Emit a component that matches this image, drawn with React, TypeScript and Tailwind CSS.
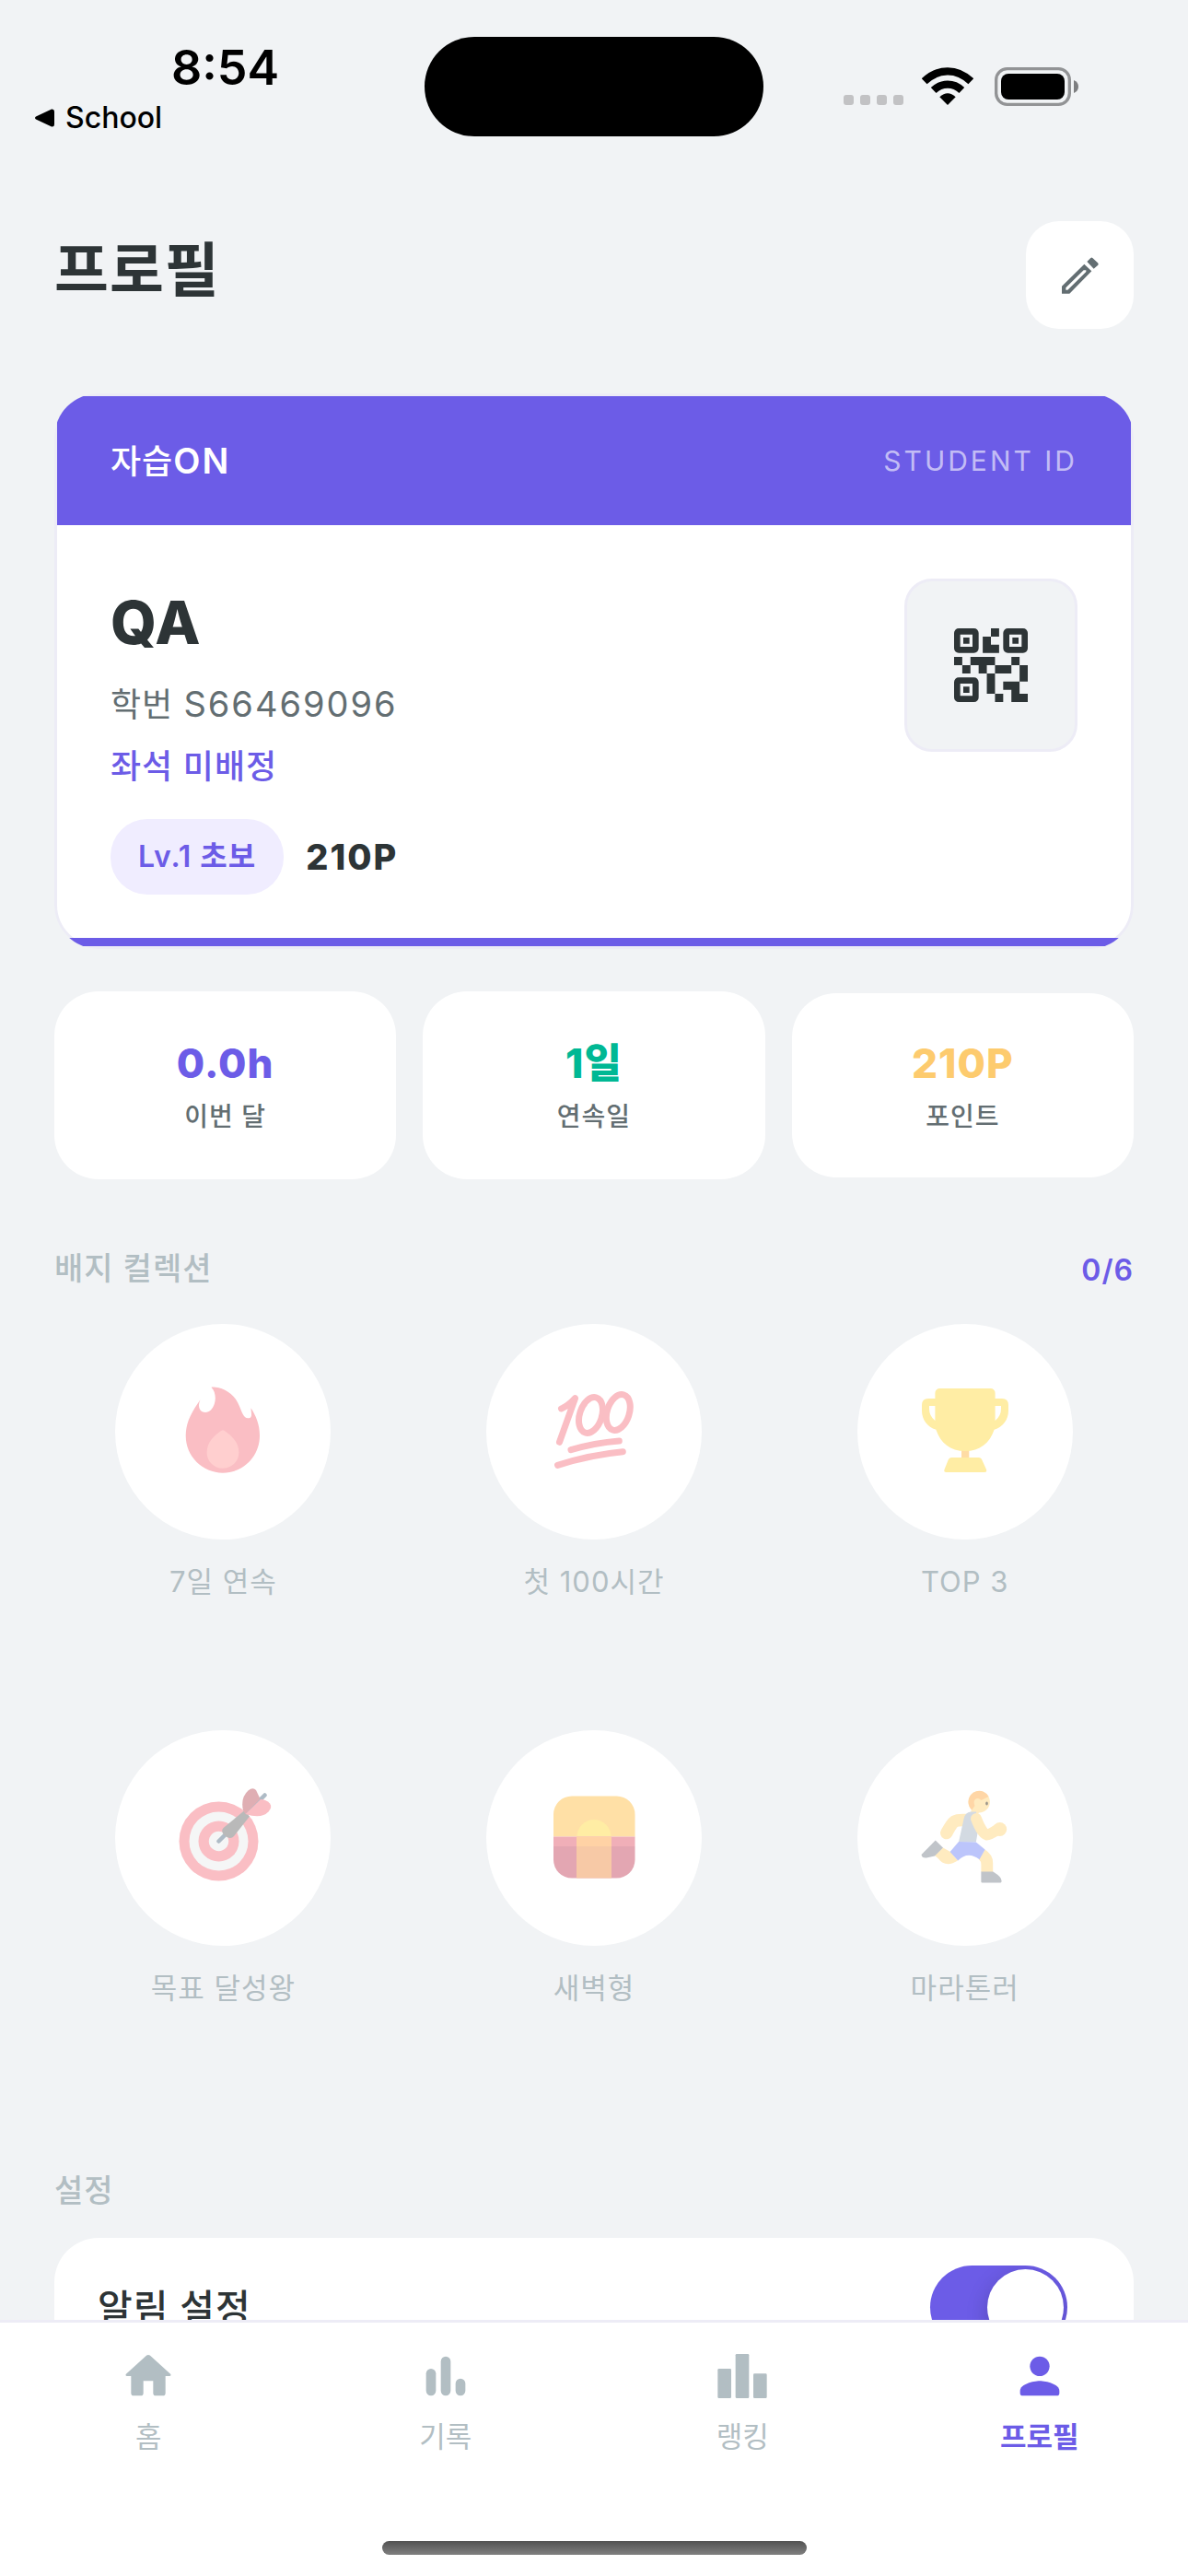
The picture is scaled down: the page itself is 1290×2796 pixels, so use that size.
import { useState, type ReactNode } from "react";
import clsx from "clsx";

interface Stat {
  value: string;
  label: string;
  className: string;
}

interface Badge {
  label: string;
  icon: ReactNode;
}

interface Tab {
  id: string;
  label: string;
  icon: ReactNode;
}

function EditIcon() {
  return (
    <svg viewBox="0 0 120 120" className="size-10" fill="currentColor" aria-hidden="true">
      <path fillRule="evenodd" d="M0 95L73 23L97 46L25 119H0ZM13 100V107H19L79 48V43H71Z" />
      <path d="M82 15L94 3Q97 0 100 3L117 19Q121 23 117 27L104 38Z" />
    </svg>
  );
}

function QrIcon() {
  return (
    <svg viewBox="0 0 18 18" className="size-20" fill="currentColor" aria-hidden="true">
      <g fill="none" stroke="currentColor" strokeWidth="1.5">
        <rect x=".75" y=".75" width="4.5" height="4.5" rx=".4" />
        <rect x="12.75" y=".75" width="4.5" height="4.5" rx=".4" />
        <rect x=".75" y="12.75" width="4.5" height="4.5" rx=".4" />
      </g>
      <path d="M2.25 2.25h1.5v1.5h-1.5zM14.25 2.25h1.5v1.5h-1.5zM2.25 14.25h1.5v1.5h-1.5z" />
      <path d="M9 0h2v2H9zM7 2h2v2h2v2H7zM0 7h2v2H0zM2 9h2v2H2zM4 7h6v2H8v2H6V9H4zM10 9h4v2h-4zM14 7h2v2h-2zM16 9h2v4h-2zM8 11h2v5H8zM10 16h2v2h-2zM12 13h4v3h2v2h-4v-3h-2z" />
    </svg>
  );
}

function WifiIcon() {
  return (
    <svg viewBox="0 0 168 123" className="h-[41px] w-14" aria-hidden="true">
      <g fill="none" stroke="#000" strokeWidth="25">
        <path d="M8 46Q42 13 84 13T160 46" />
        <path d="M38 75Q58 56 84 56T130 75" />
      </g>
      <path d="M58 97Q84 73 110 97L84 123Z" />
    </svg>
  );
}

function BatteryIcon() {
  return (
    <svg viewBox="0 0 273 126" className="h-[42px] w-[91px]" aria-hidden="true">
      <rect x="5" y="5" width="239" height="116" rx="36" fill="none" stroke="#929395" strokeWidth="10" />
      <rect x="21" y="21" width="207" height="84" rx="24" />
      <path d="M258 42Q273 48 273 63T258 84Z" fill="#7d7e80" />
    </svg>
  );
}

function FireIcon() {
  return (
    <svg viewBox="0 0 108 108" className="size-[108px]" aria-hidden="true">
      <path
        fill="#fabec4"
        d="M41.4 5.7C48 4.6 62 9 68.3 19.3C74 28 75 39.3 81.3 39.3C87 39.3 84.5 33 84.5 28.3C90 37 94 46 94 58.3C94 81 76 98.7 54 98.7S13.7 81 13.7 58.3C13.7 45 19 34 29.5 19.3C26 27 29 33 35 33C45 33 50 14 41.4 5.7Z"
      />
      <path
        fill="#ffcfcf"
        d="M52.5 52.8Q54 51.5 55.5 52.8C63 58 71.4 65 71.4 76.7C71.4 86 63.6 93.7 54 93.7S36.6 86 36.6 76.7C36.6 65 45 58 52.5 52.8Z"
      />
    </svg>
  );
}

function HundredIcon() {
  return (
    <svg viewBox="0 0 108 108" className="size-[108px]" fill="none" stroke="#fabec4" strokeWidth="7" strokeLinecap="round" strokeLinejoin="round" aria-hidden="true">
      <path d="M18.5 29Q26 26 33.5 17.7L16.5 65.3" />
      <ellipse cx="50.5" cy="36" rx="12" ry="20" transform="rotate(18 50.5 36)" />
      <ellipse cx="80.3" cy="33" rx="12" ry="20" transform="rotate(18 80.3 33)" />
      <path d="M29 73.7Q55 66 81.3 64" />
      <path d="M14.5 90.3Q50 79 85.3 75.7" />
    </svg>
  );
}

function TrophyIcon() {
  return (
    <svg viewBox="0 0 108 108" className="size-[108px]" aria-hidden="true">
      <path fill="#ffdca4" d="M50 74h8.3v9H50z" />
      <path
        fill="#ffeda4"
        fillRule="evenodd"
        d="M26.4 7H81.6a5 5 0 0 1 5 5V18H94q7 0 7 7V31C101 41 95 49 85.6 51.7C81 66 70 75 54 75S27 66 22.4 51.7C13 49 7 41 7 31V25Q7 18 14 18H21.4V12a5 5 0 0 1 5-5ZM15 26V29Q15 37 21.4 42V26ZM86.6 26V42Q93 37 93 29V26Z"
      />
      <path fill="#ffeda4" d="M39.5 82H68.500Q71.500 82 72.500 85L77 95Q78 98 75 98H33.500Q30.500 98 31.500 95L35.500 85Q36.500 82 39.500 82Z" />
    </svg>
  );
}

function TargetIcon() {
  return (
    <svg viewBox="0 0 108 108" className="size-[108px]" aria-hidden="true">
      <circle cx="49.5" cy="57.5" r="43" fill="#fabec4" />
      <circle cx="49.5" cy="57.5" r="32" fill="#f5f6f6" />
      <circle cx="49.5" cy="57.5" r="22" fill="#fabec4" />
      <circle cx="49.5" cy="57.5" r="10.7" fill="#f5f6f6" />
      <path d="M49.5 57.5L99.5 7.5" stroke="#aebbc6" strokeWidth="4.5" strokeLinecap="round" />
      <path fill="#b9b9b9" d="M77 24.5L83 30.5L66 52Q63 55.5 58.5 53Q52 49.5 53.5 44.5Q54.5 42.5 57 41Z" />
      <path fill="#dfaeb3" d="M76 24Q73 10 81.5 2.5Q86.5-1.5 90 2L94.5 11.5L78.5 28Z" />
      <path fill="#fabec4" d="M78.5 28L95 12Q101 12 105 16.5Q108 20 103.5 25.5Q96 33.5 78.5 28Z" />
    </svg>
  );
}

function SunriseIcon() {
  return (
    <svg viewBox="0 0 108 108" className="size-[108px]" aria-hidden="true">
      <path fill="#ffe0a6" d="M10 52.5V28.5a20 20 0 0 1 20-20H78.5a20 20 0 0 1 20 20V52.5Z" />
      <path fill="#ffeda4" d="M35.5 52.5a18.5 18.5 0 0 1 37 0Z" />
      <path fill="#f0afb8" d="M10 52.5H98.5V63H10Z" />
      <path fill="#e3a6b2" d="M10 63H98.5V77.5a20 20 0 0 1-20 20H30a20 20 0 0 1-20-20Z" />
      <path fill="#ffd2a5" d="M35 52.5H73V63H35Z" />
      <path fill="#f7c9a6" d="M35 63H73V97.5H35Z" />
    </svg>
  );
}

function RunnerIcon() {
  return (
    <svg viewBox="0 0 108 108" className="size-[108px]" strokeLinecap="round" strokeLinejoin="round" aria-hidden="true">
      <path d="M55 34.5Q46 34 42.5 36Q39.5 38 33.8 48.5" fill="none" stroke="#ffebc0" strokeWidth="13.5" />
      <circle cx="69.2" cy="14.8" r="11.7" fill="#ffebc0" />
      <path fill="#ffebc0" d="M61 22L60 27L68 28L70 24Z" />
      <path fill="#ffd6a6" d="M61.3 23.5Q57.5 20 57.5 14.8A11.7 11.7 0 0 1 79.5 9L71.5 13Q68 9.5 65 12Q62.5 14 64.5 19Z" />
      <ellipse cx="77.5" cy="16.5" rx="1.3" ry="1.9" fill="#9b958a" />
      <path fill="#d3dae2" d="M47 58.5L52.6 33Q54 26 60 25.5H66L68 46L65.8 58.5Z" />
      <path d="M66 33Q72 49 77.5 50.5Q80 51 90.5 44" fill="none" stroke="#ffebc0" strokeWidth="12" />
      <circle cx="91.7" cy="44.5" r="7.5" fill="#ffebc0" />
      <path fill="#ffebc0" d="M30 64.5L38 69L46 78.5Q33 87 24.5 76L21 73Z" />
      <path fill="#c0c4c9" d="M21.8 56.5L30 64.5L21 73.5L12 75.5Q7 76 6.5 72Z" />
      <path fill="#ffebc0" d="M75.5 66.5Q84.2 72 84.2 81V91H71.4V83Q71.4 79 68.8 77Z" />
      <path fill="#c0c4c9" d="M71.4 90.5H84.2Q93.6 96 93.6 100.5Q93.6 102.5 92.5 102.5H72.5Q71.4 102.5 71.4 101.5Z" />
      <path fill="#bcc5fb" d="M47 58L65.8 58.5L75.6 66.5L69.5 77.2Q57 67.5 46.2 78.5L37.6 69Z" />
    </svg>
  );
}

const stats: Stat[] = [
  { value: "0.0h", label: "이번 달", className: "text-[#6c5ce7]" },
  { value: "1일", label: "연속일", className: "text-[#00b894]" },
  { value: "210P", label: "포인트", className: "text-[#fdcb6e]" },
];

const badges: Badge[] = [
  { label: "7일 연속", icon: <FireIcon /> },
  { label: "첫 100시간", icon: <HundredIcon /> },
  { label: "TOP 3", icon: <TrophyIcon /> },
  { label: "목표 달성왕", icon: <TargetIcon /> },
  { label: "새벽형", icon: <SunriseIcon /> },
  { label: "마라톤러", icon: <RunnerIcon /> },
];

const tabs: Tab[] = [
  {
    id: "home",
    label: "홈",
    icon: <path d="M10 19v-5h4v5c0 .55.45 1 1 1h3c.55 0 1-.45 1-1v-7h1.7c.46 0 .68-.57.33-.87L12.67 3.6c-.38-.34-.96-.34-1.34 0l-8.36 7.53c-.34.3-.13.87.33.87H5v7c0 .55.45 1 1 1h3c.55 0 1-.45 1-1z" />,
  },
  {
    id: "history",
    label: "기록",
    icon: (
      <>
        <rect x="4" y="9" width="4" height="11" rx="2" />
        <rect x="10" y="4" width="4" height="16" rx="2" />
        <rect x="16" y="13" width="4" height="7" rx="2" />
      </>
    ),
  },
  {
    id: "ranking",
    label: "랭킹",
    icon: (
      <>
        <rect x="2" y="9" width="5.5" height="12" rx=".5" />
        <rect x="9.25" y="3" width="5.5" height="18" rx=".5" />
        <rect x="16.5" y="11" width="5.5" height="10" rx=".5" />
      </>
    ),
  },
  {
    id: "profile",
    label: "프로필",
    icon: (
      <>
        <circle cx="12" cy="8" r="4" />
        <path d="M12 14c-2.67 0-8 1.34-8 4v1c0 .55.45 1 1 1h14c.55 0 1-.45 1-1v-1c0-2.66-5.33-4-8-4z" />
      </>
    ),
  },
];

function StatusBar() {
  return (
    <div className="grid grid-cols-[1fr_368px_1fr] pt-10 text-black">
      <div className="flex flex-col pl-[38px]">
        <span className="pl-[148px] text-[52px] leading-[68px] font-semibold">8:54</span>
        <a href="#school" className="flex items-center gap-3 text-[32px] leading-10 font-medium">
          <svg viewBox="0 0 21 20" className="h-5 w-[21px]" aria-hidden="true">
            <path d="M1 8.5L18 .5Q21 0 21 3V17Q21 20 18 19.5L1 11.5Q-1 10 1 8.5Z" />
          </svg>
          School
        </a>
      </div>
      <div className="h-[108px] rounded-full bg-black" />
      <div className="flex items-start pt-[33px] pl-[87px]">
        <div className="mt-[30px] flex gap-[7px]">
          {[0, 1, 2, 3].map((dot) => (
            <span key={dot} className="size-[11px] rounded-[3px] bg-[#c2c2c4]" />
          ))}
        </div>
        <div className="ml-[20px]">
          <WifiIcon />
        </div>
        <div className="ml-[23px]">
          <BatteryIcon />
        </div>
      </div>
    </div>
  );
}

function StudentCard() {
  return (
    <section className="mt-[70px] overflow-hidden rounded-[48px]">
      <div className="rounded-[48px] border-[3px] border-[#edecf6] bg-white">
        <div className="flex h-[140px] items-center justify-between bg-[#6c5ce7] px-[58px]">
          <span className="text-4xl font-medium text-white">
            자습<span className="text-[38px] font-semibold tracking-[2px]">ON</span>
          </span>
          <span className="text-[30px] tracking-[3px] text-white/60">STUDENT ID</span>
        </div>

        <div className="flex items-start justify-between px-[58px] pt-[58px] pb-[47px]">
          <div>
            <h2 className="text-[64px] leading-24 font-extrabold text-[#2d3436]">QA</h2>
            <p className="mt-4 text-4xl leading-12 text-[#636e72]">
              학번 <span className="text-[38px] tracking-[2px]">S66469096</span>
            </p>
            <p className="mt-[19px] text-4xl leading-12 font-medium text-[#6c5ce7]">좌석 미배정</p>
            <div className="mt-[33px] flex items-center gap-6">
              <span className="rounded-[40px] bg-[#f0edff] px-[30px] py-[17px] text-[32px] leading-12 font-semibold text-[#6c5ce7]">
                Lv.1 초보
              </span>
              <span className="text-[38px] font-extrabold tracking-[2px] text-[#2d3436]">210P</span>
            </div>
          </div>
          <div className="flex size-[188px] items-center justify-center rounded-[30px] border-[3px] border-[#edecf6] bg-[#f1f3f5] text-[#2d3436]">
            <QrIcon />
          </div>
        </div>

        <div className="h-[9px] bg-[#6c5ce7]" />
      </div>
    </section>
  );
}

function StatCard({ value, label, className }: Stat) {
  return (
    <div className="flex flex-1 flex-col items-center rounded-[48px] bg-white py-[50px] last:py-12">
      <span className={clsx("text-[44px] leading-14 font-extrabold", className)}>{value}</span>
      <span className="mt-3 text-[28px] leading-9 font-medium text-[#636e72]">{label}</span>
    </div>
  );
}

function BadgeItem({ label, icon }: Badge) {
  return (
    <li className="flex h-[405px] flex-col items-center">
      <div className="flex size-[234px] items-center justify-center rounded-full bg-white">{icon}</div>
      <span className="mt-[22px] text-[31px] leading-12 text-[#b2bec3]">{label}</span>
    </li>
  );
}

export default function App() {
  const [notifications, setNotifications] = useState(true);
  const [activeTab, setActiveTab] = useState("profile");

  return (
    <div className="flex h-screen flex-col overflow-hidden bg-[#f1f3f5] font-[Inter,'Noto_Sans_CJK_KR',sans-serif] antialiased">
      <StatusBar />

      <main className="min-h-0 flex-1 overflow-hidden px-[59px] pt-[92px] tracking-[1px]">
        <header className="flex items-center justify-between">
          <h1 className="pb-3 text-[64px] leading-20 font-bold text-[#2d3436]">프로필</h1>
          <button
            type="button"
            aria-label="프로필 수정"
            className="flex size-[117px] cursor-pointer items-center justify-center rounded-[36px] bg-white text-[#636e72]"
          >
            <EditIcon />
          </button>
        </header>

        <StudentCard />

        <div className="mt-[46px] flex items-center gap-[29px]">
          {stats.map((stat) => (
            <StatCard key={stat.label} {...stat} />
          ))}
        </div>

        <div className="mt-[71px] flex items-center justify-between">
          <h3 className="text-[34px] leading-12 font-medium text-[#b2bec3]">배지 컬렉션</h3>
          <span className="pt-1 text-[32px] leading-12 font-semibold text-[#6c5ce7]">0/6</span>
        </div>
        <ul className="mt-[34px] grid grid-cols-3 gap-9">
          {badges.map((badge) => (
            <BadgeItem key={badge.label} {...badge} />
          ))}
        </ul>

        <h3 className="mt-[71px] text-[34px] leading-12 font-medium text-[#b2bec3]">설정</h3>
        <div className="mt-[27px] rounded-[48px] bg-white">
          <label className="flex items-center justify-between py-[30px] pr-[72px] pl-[47px]">
            <span className="text-[41px] leading-[60px] font-medium text-[#2d3436]">알림 설정</span>
            <input
              type="checkbox"
              role="switch"
              checked={notifications}
              onChange={(e) => setNotifications(e.target.checked)}
              className="h-[91px] w-[149px] cursor-pointer appearance-none overflow-hidden rounded-full bg-[#b2bec3] p-1 before:block before:size-[83px] before:rounded-full before:bg-white before:shadow-[0_8px_24px_rgba(0,0,0,0.2)] checked:bg-[#6c5ce7] checked:before:ml-[58px]"
            />
          </label>
        </div>
      </main>

      <nav className="flex h-[278px] shrink-0 flex-col items-center border-t-[3px] border-[#edecf6] bg-white">
        <div className="grid w-full grid-cols-4 pt-[26px]">
          {tabs.map(({ id, label, icon }) => (
            <button
              key={id}
              type="button"
              onClick={() => setActiveTab(id)}
              className={clsx(
                "flex cursor-pointer flex-col items-center gap-3 text-[31px] leading-11",
                activeTab === id ? "font-bold text-[#6c5ce7]" : "text-[#b2bec3]"
              )}
            >
              <svg viewBox="0 0 24 24" className="size-16" fill="currentColor" aria-hidden="true">
                {icon}
              </svg>
              {label}
            </button>
          ))}
        </div>
        <div className="mt-auto mb-[23px] h-[15px] w-[461px] rounded-full bg-linear-to-b from-[#525252] to-[#808080]" />
      </nav>
    </div>
  );
}
